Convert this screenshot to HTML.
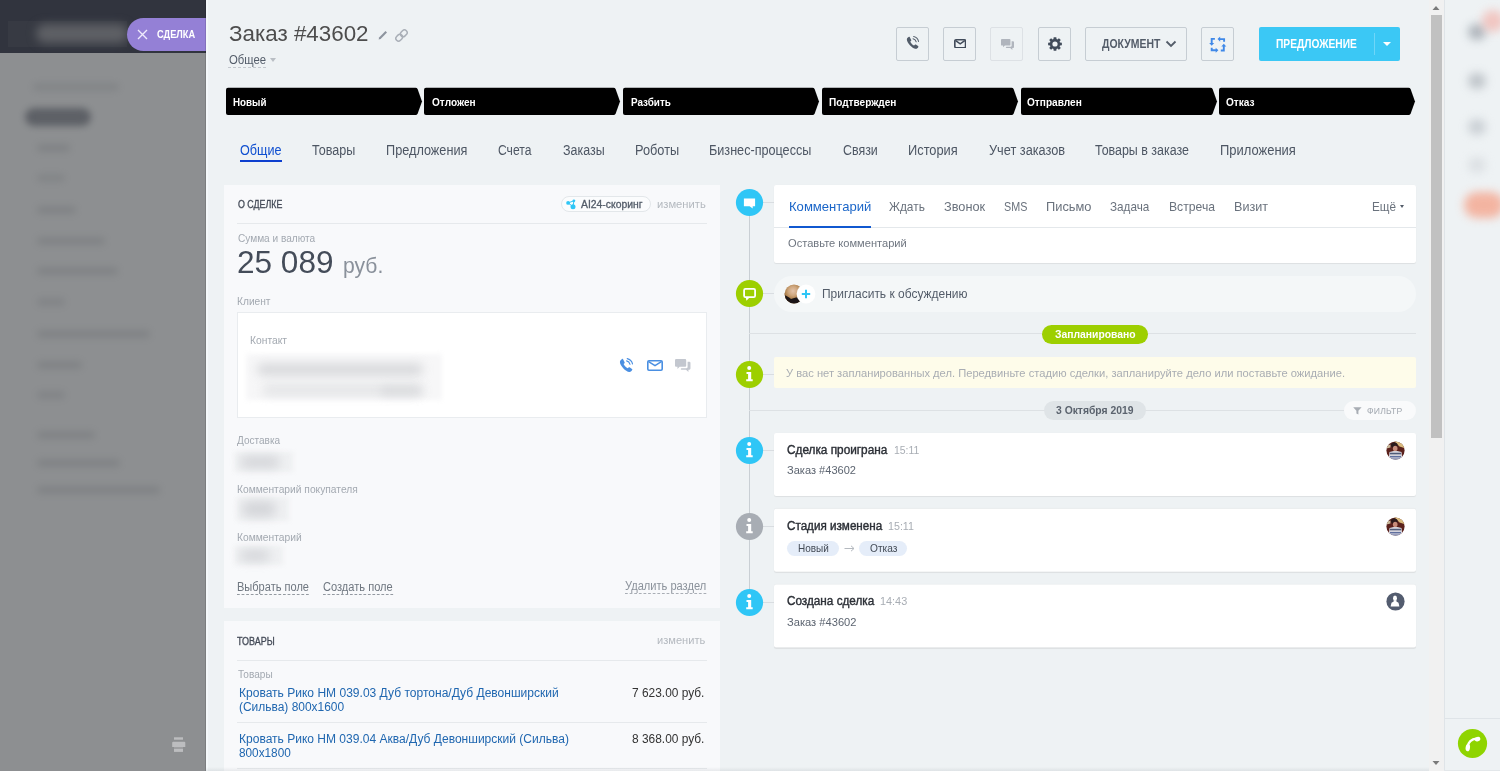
<!DOCTYPE html>
<html><head><meta charset="utf-8">
<style>
*{box-sizing:border-box;margin:0;padding:0}
html,body{width:1500px;height:771px;overflow:hidden}
body{font-family:"Liberation Sans",sans-serif;background:#eef2f4;position:relative;color:#333}
.abs{position:absolute}
.t{position:absolute;white-space:nowrap;line-height:1}
/* left overlay */
#lefthead{left:0;top:0;width:206px;height:53px;background:#31343e}
#leftbody{left:0;top:53px;width:206px;height:718px;background:#8d8f91}
.blur{position:absolute;border-radius:8px;filter:blur(4px)}
#label{left:127px;top:18px;width:80px;height:33px;background:#9480d6;border-radius:16.5px 0 0 16.5px}
/* panel */
#panel{left:206px;top:0;width:1224px;height:771px;background:#eef2f4}
.btn{position:absolute;top:27px;height:34px;border:1px solid #c6cdd3;border-radius:2px;background:#eef2f4}
.stage{position:absolute;top:88px;height:27px;width:196px;background:#000}
.stage span{position:absolute;left:7px;top:8px;font-size:12px;font-weight:bold;color:#fff;line-height:1;letter-spacing:-0.3px}
.tab{position:absolute;font-size:14px;color:#4d5663;line-height:1;white-space:nowrap}
.card{position:absolute;background:#f8f9fb}
.lbl{position:absolute;font-size:12px;color:#a3a9b1;line-height:1;white-space:nowrap;letter-spacing:-0.2px}
.hr{position:absolute;height:1px;background:#e6e9ec}
.tl-card{position:absolute;left:774px;width:642px;background:#fff;border-radius:2px;box-shadow:0 1px 1px rgba(0,0,0,.07),0 0 1px rgba(0,0,0,.04)}
.ic{position:absolute;width:27px;height:27px;border-radius:50%}
</style></head><body>

<!-- LEFT OVERLAY -->
<div class="abs" id="lefthead"></div>
<div class="abs" id="leftbody"></div>
<!-- left blurred content -->
<div class="abs" style="left:8px;top:21px;width:119px;height:26px;background:#373a43"></div>
<div class="abs" style="left:36px;top:24px;width:92px;height:19px;border-radius:9px;background:#5e6065;filter:blur(5px)"></div>
<div class="abs" style="left:33px;top:82.6px;width:86px;height:8px;border-radius:4px;background:#50545a;opacity:0.16;filter:blur(3.5px)"></div>
<div class="abs" style="left:37px;top:143.5px;width:33px;height:8px;border-radius:4px;background:#50545a;opacity:0.2;filter:blur(3.5px)"></div>
<div class="abs" style="left:37px;top:174.0px;width:28px;height:8px;border-radius:4px;background:#50545a;opacity:0.16;filter:blur(3.5px)"></div>
<div class="abs" style="left:37px;top:205.7px;width:39px;height:8px;border-radius:4px;background:#50545a;opacity:0.2;filter:blur(3.5px)"></div>
<div class="abs" style="left:37px;top:236.8px;width:68px;height:8px;border-radius:4px;background:#50545a;opacity:0.2;filter:blur(3.5px)"></div>
<div class="abs" style="left:37px;top:267.0px;width:81px;height:8px;border-radius:4px;background:#50545a;opacity:0.2;filter:blur(3.5px)"></div>
<div class="abs" style="left:37px;top:298.0px;width:28px;height:8px;border-radius:4px;background:#50545a;opacity:0.18;filter:blur(3.5px)"></div>
<div class="abs" style="left:37px;top:329.5px;width:113px;height:8px;border-radius:4px;background:#50545a;opacity:0.2;filter:blur(3.5px)"></div>
<div class="abs" style="left:37px;top:360.6px;width:45px;height:8px;border-radius:4px;background:#50545a;opacity:0.2;filter:blur(3.5px)"></div>
<div class="abs" style="left:37px;top:391.0px;width:28px;height:8px;border-radius:4px;background:#50545a;opacity:0.18;filter:blur(3.5px)"></div>
<div class="abs" style="left:37px;top:431.0px;width:58px;height:8px;border-radius:4px;background:#50545a;opacity:0.2;filter:blur(3.5px)"></div>
<div class="abs" style="left:37px;top:459.0px;width:83px;height:8px;border-radius:4px;background:#50545a;opacity:0.2;filter:blur(3.5px)"></div>
<div class="abs" style="left:37px;top:486.0px;width:123px;height:8px;border-radius:4px;background:#50545a;opacity:0.2;filter:blur(3.5px)"></div>
<div class="abs" style="left:25px;top:108px;width:66px;height:18px;border-radius:9px;background:#5b5e64;opacity:.95;filter:blur(3.5px)"></div>
<svg class="abs" style="left:172px;top:737px" width="14" height="16" viewBox="0 0 14 16"><rect x="2" y="0.3" width="9" height="2.4" fill="#bcbdbf"/><path d="M1.2 4.8 H12.3 Q13.3 4.8 13.3 5.8 V10 H11 V9.9 H2.4 V10 H0.2 V5.8 Q0.2 4.8 1.2 4.8 Z" fill="#bcbdbf"/><rect x="2" y="10" width="9" height="2" fill="#9fa0a2"/><rect x="2" y="12" width="9" height="2.9" fill="#bcbdbf"/></svg>
<div class="abs" id="label"></div>
<div class="t" id="sdelka" style="left:156.8px;top:29.54px;font-size:10px;font-weight:bold;color:#fff;transform-origin:0 0;transform:scaleX(0.927)">СДЕЛКА</div>
<svg class="abs" style="left:137px;top:29px" width="11" height="11" viewBox="0 0 11 11" stroke="#efeafc" stroke-width="1.4" fill="none"><path d="M1 1 L10 10 M10 1 L1 10"/></svg>

<!-- PANEL -->
<div class="abs" id="panel"></div>

<div class="abs" style="left:205px;top:0;width:1px;height:771px;background:rgba(0,0,0,.12)"></div>
<div class="abs" style="left:206px;top:0;width:2px;height:771px;background:#f4f8fa"></div>
<!-- title -->
<div class="t" id="title" style="left:228.6px;top:22.95px;font-size:22.5px;color:#4d4d4d;transform-origin:0 0;transform:scaleX(0.994)">Заказ #43602</div>
<div class="t" id="obsh" style="left:228.6px;top:53.84px;font-size:12px;color:#535c69;transform-origin:0 0;transform:scaleX(0.944)">Общее</div>


<!-- pencil & link icons -->
<svg class="abs" style="left:377px;top:29px" width="12" height="12" viewBox="0 0 12 12"><path d="M1.6 10.4 L2.1 8.4 L8.5 2 L10 3.5 L3.6 9.9 Z" fill="#8d949e"/></svg>
<svg class="abs" style="left:395px;top:29px" width="13" height="13" viewBox="0 0 13 13" fill="none" stroke="#a9afb7" stroke-width="1.5"><rect x="6.1" y="0.7" width="5.4" height="7.2" rx="2.7" transform="rotate(45 8.8 4.3)"/><rect x="1.5" y="5.1" width="5.4" height="7.2" rx="2.7" transform="rotate(45 4.2 8.7)"/></svg>
<div class="abs" style="left:228px;top:67px;width:38px;border-top:1px dashed #c3c8ce"></div>
<div class="abs" style="left:270px;top:58px;width:0;height:0;border:3.5px solid transparent;border-top:4px solid #b9bec4"></div>

<!-- top buttons -->
<div class="btn" style="left:896px;width:33.4px"></div>
<div class="btn" style="left:943px;width:33.4px"></div>
<div class="btn" style="left:990px;width:33.4px;border-color:#dde1e5"></div>
<div class="btn" style="left:1038px;width:33.4px"></div>
<div class="btn" style="left:1085px;width:102px"></div>
<div class="t" id="dok" style="left:1102.0px;top:37.84px;font-size:12px;font-weight:bold;color:#535c69;transform-origin:0 0;transform:scaleX(0.871)">ДОКУМЕНТ</div>
<svg class="abs" style="left:1165px;top:40px" width="12" height="8" viewBox="0 0 12 8" fill="none" stroke="#535c69" stroke-width="1.8"><path d="M1.5 1.5 L6 6 L10.5 1.5"/></svg>
<div class="btn" style="left:1201px;width:33.4px"></div>
<div class="abs" style="left:1259px;top:27px;width:141px;height:34px;background:#3bc8f5;border-radius:2px"></div>
<div class="t" id="predl" style="left:1276.3px;top:37.84px;font-size:12px;font-weight:bold;color:#fff;transform-origin:0 0;transform:scaleX(0.852)">ПРЕДЛОЖЕНИЕ</div>
<div class="abs" style="left:1374px;top:33px;width:1px;height:22px;background:#6fd6f8"></div>
<div class="abs" style="left:1383px;top:42px;width:0;height:0;border:4px solid transparent;border-top:4px solid #fff"></div>


<!-- stages -->
<svg class="abs" style="left:226.0px;top:87px" width="198" height="29" viewBox="0 0 198 29"><path d="M2 0.7 H189.5 Q191 0.7 191.6 2 L196 14.4 L191.6 26.8 Q191 28.1 189.5 28.1 H2 Q0 28.1 0 26.1 V2.7 Q0 0.7 2 0.7 Z" fill="#000"/></svg>
<div class="t" id="st0" style="left:233.3px;top:96.84px;font-size:11.5px;font-weight:bold;color:#fff;transform-origin:0 0;transform:scaleX(0.852)">Новый</div>
<svg class="abs" style="left:424.0px;top:87px" width="198" height="29" viewBox="0 0 198 29"><path d="M2 0.7 H189.5 Q191 0.7 191.6 2 L196 14.4 L191.6 26.8 Q191 28.1 189.5 28.1 H2 Q0 28.1 0 26.1 V2.7 Q0 0.7 2 0.7 Z" fill="#000"/></svg>
<div class="t" id="st1" style="left:431.5px;top:96.84px;font-size:11.5px;font-weight:bold;color:#fff;transform-origin:0 0;transform:scaleX(0.877)">Отложен</div>
<svg class="abs" style="left:622.8px;top:87px" width="198" height="29" viewBox="0 0 198 29"><path d="M2 0.7 H189.5 Q191 0.7 191.6 2 L196 14.4 L191.6 26.8 Q191 28.1 189.5 28.1 H2 Q0 28.1 0 26.1 V2.7 Q0 0.7 2 0.7 Z" fill="#000"/></svg>
<div class="t" id="st2" style="left:630.5px;top:96.84px;font-size:11.5px;font-weight:bold;color:#fff;transform-origin:0 0;transform:scaleX(0.860)">Разбить</div>
<svg class="abs" style="left:822.0px;top:87px" width="198" height="29" viewBox="0 0 198 29"><path d="M2 0.7 H189.5 Q191 0.7 191.6 2 L196 14.4 L191.6 26.8 Q191 28.1 189.5 28.1 H2 Q0 28.1 0 26.1 V2.7 Q0 0.7 2 0.7 Z" fill="#000"/></svg>
<div class="t" id="st3" style="left:828.7px;top:96.84px;font-size:11.5px;font-weight:bold;color:#fff;transform-origin:0 0;transform:scaleX(0.874)">Подтвержден</div>
<svg class="abs" style="left:1020.6px;top:87px" width="198" height="29" viewBox="0 0 198 29"><path d="M2 0.7 H189.5 Q191 0.7 191.6 2 L196 14.4 L191.6 26.8 Q191 28.1 189.5 28.1 H2 Q0 28.1 0 26.1 V2.7 Q0 0.7 2 0.7 Z" fill="#000"/></svg>
<div class="t" id="st4" style="left:1027.4px;top:96.84px;font-size:11.5px;font-weight:bold;color:#fff;transform-origin:0 0;transform:scaleX(0.878)">Отправлен</div>
<svg class="abs" style="left:1219.2px;top:87px" width="198" height="29" viewBox="0 0 198 29"><path d="M2 0.7 H189.5 Q191 0.7 191.6 2 L196 14.4 L191.6 26.8 Q191 28.1 189.5 28.1 H2 Q0 28.1 0 26.1 V2.7 Q0 0.7 2 0.7 Z" fill="#000"/></svg>
<div class="t" id="st5" style="left:1225.9px;top:96.84px;font-size:11.5px;font-weight:bold;color:#fff;transform-origin:0 0;transform:scaleX(0.876)">Отказ</div>

<!-- tabs -->
<div class="tab" id="tab0" style="top:143.15px;font-size:14px;left:239.9px;color:#0f4fd0;transform-origin:0 0;transform:scaleX(0.900)">Общие</div>
<div class="tab" id="tab1" style="top:143.15px;font-size:14px;left:312.1px;color:#4d5663;transform-origin:0 0;transform:scaleX(0.898)">Товары</div>
<div class="tab" id="tab2" style="top:143.15px;font-size:14px;left:385.9px;color:#4d5663;transform-origin:0 0;transform:scaleX(0.907)">Предложения</div>
<div class="tab" id="tab3" style="top:143.15px;font-size:14px;left:498.3px;color:#4d5663;transform-origin:0 0;transform:scaleX(0.865)">Счета</div>
<div class="tab" id="tab4" style="top:143.15px;font-size:14px;left:562.5px;color:#4d5663;transform-origin:0 0;transform:scaleX(0.890)">Заказы</div>
<div class="tab" id="tab5" style="top:143.15px;font-size:14px;left:635.1px;color:#4d5663;transform-origin:0 0;transform:scaleX(0.911)">Роботы</div>
<div class="tab" id="tab6" style="top:143.15px;font-size:14px;left:709.2px;color:#4d5663;transform-origin:0 0;transform:scaleX(0.902)">Бизнес-процессы</div>
<div class="tab" id="tab7" style="top:143.15px;font-size:14px;left:843.2px;color:#4d5663;transform-origin:0 0;transform:scaleX(0.888)">Связи</div>
<div class="tab" id="tab8" style="top:143.15px;font-size:14px;left:908.4px;color:#4d5663;transform-origin:0 0;transform:scaleX(0.916)">История</div>
<div class="tab" id="tab9" style="top:143.15px;font-size:14px;left:988.8px;color:#4d5663;transform-origin:0 0;transform:scaleX(0.911)">Учет заказов</div>
<div class="tab" id="tab10" style="top:143.15px;font-size:14px;left:1095.2px;color:#4d5663;transform-origin:0 0;transform:scaleX(0.889)">Товары в заказе</div>
<div class="tab" id="tab11" style="top:143.15px;font-size:14px;left:1219.9px;color:#4d5663;transform-origin:0 0;transform:scaleX(0.926)">Приложения</div>
<div class="abs" style="left:239.6px;top:160px;width:42.4px;height:2px;background:#0d3fcf"></div>


<!-- LEFT CARD 1 -->
<div class="card" style="left:224px;top:185px;width:496px;height:423px"></div>
<div class="t" id="osdelke" style="left:237.5px;top:200.11px;font-size:10px;font-weight:normal;-webkit-text-stroke:0.28px #424956;color:#424956;letter-spacing:0;transform-origin:0 0;transform:scaleX(0.887)">О СДЕЛКЕ</div>
<div class="abs" style="left:561px;top:196px;width:90px;height:16px;border:1px solid #e3e7ea;border-radius:8px;background:#fbfcfd"></div>
<div class="t" id="ai24" style="left:580.9px;top:199.53px;font-size:10px;font-weight:normal;-webkit-text-stroke:0.3px #535c69;color:#535c69;letter-spacing:0;transform-origin:0 0;transform:scaleX(1.038)">AI24-скоринг</div>
<div class="t" id="izm1" style="left:657.3px;top:198.69px;font-size:11px;color:#b4b9bf;letter-spacing:0;transform-origin:0 0;transform:scaleX(1.018)">изменить</div>
<div class="hr" style="left:237px;top:223px;width:470px"></div>
<div class="lbl" id="summa" style="left:237.5px;top:232.69px;font-size:11px;letter-spacing:0;transform-origin:0 0;transform:scaleX(0.918)">Сумма и валюта</div>
<div class="t" id="sum" style="left:237.3px;top:246.76px;font-size:31px;color:#444c59;transform-origin:0 0;transform:scaleX(1.018)">25 089</div>
<div class="t" id="rub" style="left:343.2px;top:255.38px;font-size:22px;color:#8a919b;transform-origin:0 0;transform:scaleX(0.961)">руб.</div>
<div class="lbl" id="klient" style="left:237.3px;top:295.69px;font-size:11px;letter-spacing:0;transform-origin:0 0;transform:scaleX(0.926)">Клиент</div>
<div class="abs" style="left:237px;top:312px;width:470px;height:106px;background:#fff;border:1px solid #e9ecef"></div>
<div class="lbl" id="kontakt" style="left:250.1px;top:334.69px;font-size:11px;letter-spacing:0;transform-origin:0 0;transform:scaleX(0.935)">Контакт</div>
<div class="lbl" id="dost" style="left:237.3px;top:434.69px;font-size:11px;letter-spacing:0;transform-origin:0 0;transform:scaleX(0.912)">Доставка</div>
<div class="lbl" id="kompok" style="left:237.3px;top:483.69px;font-size:11px;letter-spacing:0;transform-origin:0 0;transform:scaleX(0.931)">Комментарий покупателя</div>
<div class="lbl" id="komm" style="left:237.3px;top:531.69px;font-size:11px;letter-spacing:0;transform-origin:0 0;transform:scaleX(0.934)">Комментарий</div>
<div class="t" id="vyb" style="left:237.3px;top:580.84px;font-size:12px;color:#6f7780;border-bottom:1px dashed #8f959d;padding-bottom:1px;transform-origin:0 0;transform:scaleX(0.920)">Выбрать поле</div>
<div class="t" id="sozd" style="left:323.1px;top:580.84px;font-size:12px;color:#6f7780;border-bottom:1px dashed #8f959d;padding-bottom:1px;transform-origin:0 0;transform:scaleX(0.923)">Создать поле</div>
<div class="t" id="udal" style="left:625.4px;top:579.84px;font-size:12px;color:#8b929b;border-bottom:1px dashed #a5abb2;padding-bottom:1px;transform-origin:0 0;transform:scaleX(0.924)">Удалить раздел</div>

<!-- LEFT CARD 2 -->
<div class="card" style="left:224px;top:621px;width:496px;height:150px"></div>
<div class="t" id="tovh" style="left:237.3px;top:637.11px;font-size:10px;font-weight:normal;-webkit-text-stroke:0.28px #424956;color:#424956;letter-spacing:0;transform-origin:0 0;transform:scaleX(0.900)">ТОВАРЫ</div>
<div class="t" id="izm2" style="left:657.3px;top:634.69px;font-size:11px;color:#b4b9bf;letter-spacing:0;transform-origin:0 0;transform:scaleX(1.008)">изменить</div>
<div class="hr" style="left:237px;top:660px;width:470px"></div>
<div class="lbl" id="tovl" style="left:237.6px;top:668.69px;font-size:11px;letter-spacing:0;transform-origin:0 0;transform:scaleX(0.915)">Товары</div>
<div class="t" id="p1a" style="left:239.0px;top:686.84px;font-size:12px;color:#2067b0;transform-origin:0 0;transform:scaleX(1.003)">Кровать Рико НМ 039.03 Дуб тортона/Дуб Девонширский</div>
<div class="t" id="p1b" style="left:239.0px;top:700.84px;font-size:12px;color:#2067b0;transform-origin:0 0;transform:scaleX(0.996)">(Сильва) 800х1600</div>
<div class="t" id="pr1" style="left:631.6px;top:686.84px;font-size:12px;color:#333;transform-origin:0 0;transform:scaleX(0.993)">7 623.00 руб.</div>
<div class="hr" style="left:237px;top:722px;width:470px"></div>
<div class="t" id="p2a" style="left:239.0px;top:732.84px;font-size:12px;color:#2067b0;transform-origin:0 0;transform:scaleX(1.002)">Кровать Рико НМ 039.04 Аква/Дуб Девонширский (Сильва)</div>
<div class="t" id="p2b" style="left:239.0px;top:746.84px;font-size:12px;color:#2067b0;transform-origin:0 0;transform:scaleX(0.982)">800х1800</div>
<div class="t" id="pr2" style="left:631.6px;top:732.84px;font-size:12px;color:#333;transform-origin:0 0;transform:scaleX(0.993)">8 368.00 руб.</div>
<div class="hr" style="left:237px;top:768px;width:470px"></div>


<!-- TIMELINE -->
<div class="abs" style="left:749px;top:203px;width:1px;height:400px;background:#c9cfd4"></div>
<!-- editor card -->
<div class="abs" style="left:762px;top:202px;width:12px;height:1px;background:#d9dde1"></div>
<div class="tl-card" style="top:185px;height:78px"></div>
<div class="hr" style="left:774px;top:227px;width:642px;background:#e4e8eb"></div>
<div class="t" id="m0" style="left:788.6px;top:200.00px;font-size:13px;color:#1a65c8;transform-origin:0 0;transform:scaleX(1.005)">Комментарий</div>
<div class="abs" style="left:789px;top:226px;width:82px;height:2px;background:#1058d0"></div>
<div class="t" id="m1" style="left:889.4px;top:200.00px;font-size:13px;color:#6a727d;transform-origin:0 0;transform:scaleX(0.912)">Ждать</div>
<div class="t" id="m2" style="left:944.0px;top:200.00px;font-size:13px;color:#6a727d;transform-origin:0 0;transform:scaleX(0.980)">Звонок</div>
<div class="t" id="m3" style="left:1004.0px;top:200.00px;font-size:13px;color:#6a727d;transform-origin:0 0;transform:scaleX(0.828)">SMS</div>
<div class="t" id="m4" style="left:1045.5px;top:200.00px;font-size:13px;color:#6a727d;transform-origin:0 0;transform:scaleX(0.988)">Письмо</div>
<div class="t" id="m5" style="left:1110.0px;top:200.00px;font-size:13px;color:#6a727d;transform-origin:0 0;transform:scaleX(0.901)">Задача</div>
<div class="t" id="m6" style="left:1168.6px;top:200.00px;font-size:13px;color:#6a727d;transform-origin:0 0;transform:scaleX(0.936)">Встреча</div>
<div class="t" id="m7" style="left:1233.8px;top:200.00px;font-size:13px;color:#6a727d;transform-origin:0 0;transform:scaleX(0.969)">Визит</div>
<div class="t" id="m8" style="left:1371.5px;top:200.00px;font-size:13px;color:#6a727d;transform-origin:0 0;transform:scaleX(0.903)">Ещё</div>
<div class="abs" style="left:1400px;top:205.3px;width:0;height:0;border:2.5px solid transparent;border-top:3px solid #535c69"></div>
<div class="t" id="ostav" style="left:788.4px;top:237.69px;font-size:11px;color:#6f7680;transform-origin:0 0;transform:scaleX(1.009)">Оставьте комментарий</div>

<!-- invite -->
<div class="abs" style="left:762px;top:293px;width:12px;height:1px;background:#d9dde1"></div>
<div class="abs" style="left:774px;top:276px;width:642px;height:36px;border-radius:18px;background:#f4f7f8"></div>
<div class="t" id="invite" style="left:821.6px;top:287.84px;font-size:12px;color:#535c69;transform-origin:0 0;transform:scaleX(0.998)">Пригласить к обсуждению</div>

<!-- planned -->
<div class="abs" style="left:749px;top:333px;width:667px;height:1px;background:#dde1e4"></div>
<div class="abs" style="left:1042px;top:325px;width:106px;height:19px;border-radius:10px;background:#9dcf00"></div>
<div class="t" id="zapl" style="left:1054.5px;top:328.69px;font-size:11px;font-weight:bold;color:#fff;transform-origin:0 0;transform:scaleX(0.940)">Запланировано</div>
<div class="abs" style="left:762px;top:374px;width:12px;height:1px;background:#d9dde1"></div>
<div class="abs" style="left:774px;top:357px;width:642px;height:31px;background:#fefcea;border-radius:2px"></div>
<div class="t" id="noplan" style="left:786.0px;top:367.69px;font-size:11px;color:#a9adb3;transform-origin:0 0;transform:scaleX(1.015)">У вас нет запланированных дел. Передвиньте стадию сделки, запланируйте дело или поставьте ожидание.</div>

<!-- date -->
<div class="abs" style="left:749px;top:410px;width:667px;height:1px;background:#dde1e4"></div>
<div class="abs" style="left:1044px;top:401px;width:102px;height:19px;border-radius:10px;background:#dfe4e7"></div>
<div class="t" id="date" style="left:1056.1px;top:404.69px;font-size:11px;font-weight:bold;color:#5b636e;transform-origin:0 0;transform:scaleX(0.941)">3 Октября 2019</div>
<div class="abs" style="left:1344px;top:401px;width:72px;height:19px;border-radius:10px;background:#f9fafb"></div>
<div class="t" id="filtr" style="left:1367.3px;top:407.38px;font-size:9px;color:#a3a9b1;letter-spacing:0.2px;transform-origin:0 0;transform:scaleX(0.959)">ФИЛЬТР</div>

<!-- events -->
<div class="abs" style="left:762px;top:450px;width:12px;height:1px;background:#d9dde1"></div>
<div class="tl-card" style="top:433px;height:63px"></div>
<div class="t" id="e1" style="left:787.4px;top:443.84px;font-size:12px;color:#2b2f36;font-weight:normal;-webkit-text-stroke:0.4px #2b2f36;transform-origin:0 0;transform:scaleX(0.983)">Сделка проиграна</div>
<div class="t" id="e1t" style="left:893.6px;top:444.84px;font-size:11.5px;color:#a8adb4;transform-origin:0 0;transform:scaleX(0.908)">15:11</div>
<div class="t" id="e1s" style="left:787.4px;top:465.27px;font-size:11.5px;color:#5c6470;transform-origin:0 0;transform:scaleX(0.962)">Заказ #43602</div>

<div class="abs" style="left:762px;top:526px;width:12px;height:1px;background:#d9dde1"></div>
<div class="tl-card" style="top:508px;height:63px;transform:translateY(0.75px)"></div>
<div class="t" id="e2" style="left:787.0px;top:519.84px;font-size:12px;color:#2b2f36;font-weight:normal;-webkit-text-stroke:0.4px #2b2f36;transform-origin:0 0;transform:scaleX(0.972)">Стадия изменена</div>
<div class="t" id="e2t" style="left:888.0px;top:520.84px;font-size:11.5px;color:#a8adb4;transform-origin:0 0;transform:scaleX(0.930)">15:11</div>
<div class="abs" style="left:787px;top:541px;width:52px;height:15px;border-radius:8px;background:#e5edf9"></div>
<div class="t" id="e2a" style="left:797.8px;top:542.69px;font-size:11px;color:#434b56;transform-origin:0 0;transform:scaleX(0.908)">Новый</div>
<div class="abs" style="left:859px;top:541px;width:48px;height:15px;border-radius:8px;background:#e5edf9"></div>
<div class="t" id="e2b" style="left:869.6px;top:542.69px;font-size:11px;color:#434b56;transform-origin:0 0;transform:scaleX(0.924)">Отказ</div>
<svg class="abs" style="left:843.5px;top:544px" width="11" height="9" viewBox="0 0 11 9" fill="none" stroke="#b4b9bf" stroke-width="1"><path d="M0.5 4.5 H10 M7 1.8 L10 4.5 L7 7.2"/></svg>

<div class="abs" style="left:762px;top:602px;width:12px;height:1px;background:#d9dde1"></div>
<div class="tl-card" style="top:584px;height:63px;transform:translateY(0.5px)"></div>
<div class="t" id="e3" style="left:787.0px;top:594.84px;font-size:12px;color:#2b2f36;font-weight:normal;-webkit-text-stroke:0.4px #2b2f36;transform-origin:0 0;transform:scaleX(0.978)">Создана сделка</div>
<div class="t" id="e3t" style="left:880.2px;top:595.84px;font-size:11.5px;color:#a8adb4;transform-origin:0 0;transform:scaleX(0.944)">14:43</div>
<div class="t" id="e3s" style="left:787.0px;top:617.27px;font-size:11.5px;color:#5c6470;transform-origin:0 0;transform:scaleX(0.969)">Заказ #43602</div>

<!-- timeline icons -->
<svg class="abs" style="left:735px;top:187.9px" width="29" height="29" viewBox="-14.5 -14.5 29 29"><circle r="13.6" fill="#2fc6f6"/><path d="M-5.6 -4 H5.6 V3.8 H3.2 V6.1 L0.1 3.8 H-5.6 Z" fill="#fff"/></svg>
<svg class="abs" style="left:735px;top:278.9px" width="29" height="29" viewBox="-14.5 -14.5 29 29"><circle r="13.6" fill="#9dcf00"/><rect x="-5.4" y="-4.6" width="11" height="8.2" rx="1.4" fill="none" stroke="#fff" stroke-width="1.8"/><path d="M-3.7 4.2 H-0.2 L-3 7.2 Z" fill="#fff"/></svg>
<svg class="abs" style="left:735px;top:359.9px" width="29" height="29" viewBox="-14.5 -14.5 29 29"><circle r="13.6" fill="#9dcf00"/><circle cx="-0.3" cy="-6.5" r="2" fill="#fff"/><path d="M-3 -2.6 H1.7 V4.8 H3.2 V6.8 H-3.3 V4.8 H-1.4 V-0.5 H-3 Z" fill="#fff"/></svg>
<svg class="abs" style="left:735px;top:436.2px" width="29" height="29" viewBox="-14.5 -14.5 29 29"><circle r="13.6" fill="#2fc6f6"/><circle cx="-0.3" cy="-6.5" r="2" fill="#fff"/><path d="M-3 -2.6 H1.7 V4.8 H3.2 V6.8 H-3.3 V4.8 H-1.4 V-0.5 H-3 Z" fill="#fff"/></svg>
<svg class="abs" style="left:735px;top:511.9px" width="29" height="29" viewBox="-14.5 -14.5 29 29"><circle r="13.6" fill="#a8adb4"/><circle cx="-0.3" cy="-6.5" r="2" fill="#fff"/><path d="M-3 -2.6 H1.7 V4.8 H3.2 V6.8 H-3.3 V4.8 H-1.4 V-0.5 H-3 Z" fill="#fff"/></svg>
<svg class="abs" style="left:735px;top:587.7px" width="29" height="29" viewBox="-14.5 -14.5 29 29"><circle r="13.6" fill="#2fc6f6"/><circle cx="-0.3" cy="-6.5" r="2" fill="#fff"/><path d="M-3 -2.6 H1.7 V4.8 H3.2 V6.8 H-3.3 V4.8 H-1.4 V-0.5 H-3 Z" fill="#fff"/></svg>
<div class="abs" style="left:206px;top:767px;width:1223px;height:4px;background:linear-gradient(rgba(0,0,0,0),rgba(40,50,60,.08))"></div>
<!-- scrollbar + right panel -->
<div class="abs" style="left:1429px;top:0;width:14.5px;height:771px;background:#f1f1f1"></div>
<div class="abs" style="left:1430.5px;top:15px;width:11px;height:423px;background:#c1c1c1"></div>
<svg class="abs" style="left:1432px;top:5px" width="8" height="6" viewBox="0 0 8 6"><path d="M0.5 5 L4 1 L7.5 5 Z" fill="#7a7a7a"/></svg>
<svg class="abs" style="left:1432px;top:760px" width="8" height="6" viewBox="0 0 8 6"><path d="M0.5 1 L4 5 L7.5 1 Z" fill="#7a7a7a"/></svg>
<div class="abs" style="left:1443.5px;top:0;width:56.5px;height:771px;background:#eef2f4;border-left:1px solid #dfe4e8"></div>
<div class="abs" style="left:1444px;top:718px;width:56px;height:1px;background:#dfe4e8"></div>
<div class="abs" style="left:1444px;top:770px;width:56px;height:1px;background:#e3e7ea"></div>
<div class="abs" style="left:1468px;top:24px;width:18px;height:16px;border-radius:8px;background:#a9afb6;opacity:0.9;filter:blur(5px)"></div>
<div class="abs" style="left:1468px;top:73px;width:18px;height:16px;border-radius:8px;background:#b4bac0;opacity:0.8;filter:blur(5px)"></div>
<div class="abs" style="left:1468px;top:119px;width:18px;height:16px;border-radius:8px;background:#bcc2c8;opacity:0.7;filter:blur(5px)"></div>
<div class="abs" style="left:1468px;top:157px;width:18px;height:16px;border-radius:8px;background:#d5d9dd;opacity:0.7;filter:blur(5px)"></div>
<div class="abs" style="left:1482px;top:10px;width:22px;height:22px;border-radius:11px;background:#f3aea6;opacity:.65;filter:blur(5px)"></div>
<div class="abs" style="left:1464px;top:192px;width:40px;height:26px;border-radius:13px;background:#f5a58d;opacity:.8;filter:blur(5px)"></div>
<svg class="abs" style="left:1457px;top:728px" width="31" height="31" viewBox="-15.5 -15.5 31 31"><circle r="14.6" fill="#8fd400"/><path d="M-4.9 3.5 C-4.6 -1.2 -0.8 -4.6 3.8 -4.9" stroke="#fff" stroke-width="2.3" fill="none"/><ellipse cx="-4.7" cy="4.1" rx="2.2" ry="3.7" transform="rotate(8 -4.7 4.1)" fill="#fff"/><ellipse cx="5" cy="-4.4" rx="2.9" ry="2.2" transform="rotate(-18 5 -4.4)" fill="#fff"/></svg>
<svg class="abs" style="left:1385.5px;top:441.3px" width="19" height="19" viewBox="-9.5 -9.5 19 19"><defs><clipPath id="av1"><circle r="9.1"/></clipPath></defs><g clip-path="url(#av1)"><rect x="-10" y="-10" width="20" height="20" fill="#5a211c"/><path d="M-4 -10 H10 V-2 L4 -4 L0 -8 Z" fill="#d9bb7e"/><path d="M-9 -5 L-5 -6 L-5 -3 L-9 -2 Z" fill="#c9b89a"/><ellipse cx="-1.2" cy="-5.5" rx="3.3" ry="2.6" fill="#2a1a1c"/><ellipse cx="-0.3" cy="-2" rx="2.3" ry="2.8" fill="#c78c7a"/><path d="M-7 10 L-6 1.5 L-2 0.5 L2 0.5 L6 1.5 L7 10 Z" fill="#d4d3dc"/><rect x="-5.5" y="2.3" width="11" height="1.5" fill="#4f5b78"/><rect x="-5.5" y="5.5" width="11" height="1.4" fill="#5f6f9f"/><rect x="-5" y="8" width="10" height="1.4" fill="#5f6f9f"/></g></svg>
<svg class="abs" style="left:1385.5px;top:517.0px" width="19" height="19" viewBox="-9.5 -9.5 19 19"><defs><clipPath id="av2"><circle r="9.1"/></clipPath></defs><g clip-path="url(#av2)"><rect x="-10" y="-10" width="20" height="20" fill="#5a211c"/><path d="M-4 -10 H10 V-2 L4 -4 L0 -8 Z" fill="#d9bb7e"/><path d="M-9 -5 L-5 -6 L-5 -3 L-9 -2 Z" fill="#c9b89a"/><ellipse cx="-1.2" cy="-5.5" rx="3.3" ry="2.6" fill="#2a1a1c"/><ellipse cx="-0.3" cy="-2" rx="2.3" ry="2.8" fill="#c78c7a"/><path d="M-7 10 L-6 1.5 L-2 0.5 L2 0.5 L6 1.5 L7 10 Z" fill="#d4d3dc"/><rect x="-5.5" y="2.3" width="11" height="1.5" fill="#4f5b78"/><rect x="-5.5" y="5.5" width="11" height="1.4" fill="#5f6f9f"/><rect x="-5" y="8" width="10" height="1.4" fill="#5f6f9f"/></g></svg>
<svg class="abs" style="left:1385.5px;top:592.4px" width="19" height="19" viewBox="-9.5 -9.5 19 19"><circle r="9.1" fill="#535c6f"/><ellipse cx="-0.5" cy="-3.3" rx="2" ry="2.6" fill="#fff"/><path d="M-1.8 -1.2 H0.9 V0 L3 1.2 L3.9 5.1 H-4.9 L-4 1.2 L-1.8 0 Z" fill="#fff"/></svg>
<svg class="abs" style="left:783.5px;top:283.5px" width="20" height="20" viewBox="-10 -10 20 20"><defs><clipPath id="av0"><circle r="9.4"/></clipPath><radialGradient id="g0" cx="0.45" cy="0.35" r="0.5"><stop offset="0" stop-color="#e3c3aa"/><stop offset="0.45" stop-color="#cfa77e"/><stop offset="1" stop-color="#9a6a30"/></radialGradient></defs><circle r="10" fill="#fff" opacity=".6"/><g clip-path="url(#av0)"><rect x="-10" y="-10" width="20" height="20" fill="url(#g0)"/><path d="M-10 1 C-7 2 -5 3 -3 5 C0 4 3 3 7 4 L10 10 H-10 Z" fill="#1b1517"/><path d="M-10 -3 C-9 0 -9 3 -8 6 L-10 10 Z" fill="#5a3015"/></g></svg>
<svg class="abs" style="left:796px;top:283.8px" width="20" height="20" viewBox="-10 -10 20 20"><circle r="9.4" fill="#fff"/><path d="M-4.2 0 H4.2 M0 -4.2 V4.2" stroke="#2fc6f6" stroke-width="2" fill="none"/></svg>
<svg class="abs" style="left:1353px;top:406.5px" width="9" height="8" viewBox="0 0 9 8"><path d="M0.2 0.2 H8.6 L5.4 3.8 V7.6 L3.4 6.4 V3.8 Z" fill="#a8adb4"/></svg>

<!-- top icons -->
<svg class="abs" style="left:905.6px;top:36.3px" width="13" height="13.9" viewBox="0 0 14 15"><path d="M3.2 0.9 C2.2 1.2 0.9 2.6 0.9 3.9 C0.9 7.4 6.6 13.6 10.4 13.9 C11.6 14 12.9 12.8 13.3 11.8 C13.4 11.4 13.3 11.1 13 10.9 L10.6 9.3 C10.3 9.1 9.9 9.1 9.6 9.4 L8.7 10.3 C7.2 9.6 5.3 7.6 4.6 6.1 L5.5 5.2 C5.8 4.9 5.8 4.5 5.6 4.2 L4.1 1.3 C3.9 1 3.6 0.8 3.2 0.9 Z" fill="#525c69"/>
<path d="M7.6 2.9 C9.3 3.3 10.6 4.6 11 6.3" stroke="#525c69" stroke-width="1.1" fill="none" stroke-linecap="round"/>
<path d="M8.2 0.6 C10.9 1.2 12.9 3.2 13.5 5.9" stroke="#525c69" stroke-width="1.1" fill="none" stroke-linecap="round"/></svg>
<svg class="abs" style="left:953.7px;top:38.6px" width="12.4" height="9.5" viewBox="0 0 13 10"><rect x="0.85" y="0.85" width="11.3" height="8.3" rx="1.2" fill="none" stroke="#414b5a" stroke-width="1.7"/><path d="M1.7 1.7 L6.5 5.2 L11.3 1.7" fill="none" stroke="#414b5a" stroke-width="1.53"/></svg>
<svg class="abs" style="left:1000.8px;top:38.7px" width="13.5" height="11.7" viewBox="0 0 15 13"><path d="M1 0 H9.5 Q10.5 0 10.5 1 V6.3 Q10.5 7.3 9.5 7.3 H4.3 L2.3 9.3 V7.3 H1 Q0 7.3 0 6.3 V1 Q0 0 1 0 Z" fill="#b0b5bd"/><path d="M11.8 2.6 H13.5 Q14.5 2.6 14.5 3.6 V8.9 Q14.5 9.9 13.5 9.9 H12.6 V12.2 L10.3 9.9 H6.2 Q5.4 9.9 5.3 9.2 L6 8.6 H10.6 Q11.8 8.6 11.8 7.4 Z" fill="#b0b5bd"/></svg>
<svg class="abs" style="left:1048px;top:36.8px" width="14" height="14" viewBox="0 0 14 14"><path d="M5.46 2.03 L5.68 0.13 L8.32 0.13 L8.54 2.03 L9.43 2.40 L10.93 1.20 L12.80 3.07 L11.60 4.57 L11.97 5.46 L13.87 5.68 L13.87 8.32 L11.97 8.54 L11.60 9.43 L12.80 10.93 L10.93 12.80 L9.43 11.60 L8.54 11.97 L8.32 13.87 L5.68 13.87 L5.46 11.97 L4.57 11.60 L3.07 12.80 L1.20 10.93 L2.40 9.43 L2.03 8.54 L0.13 8.32 L0.13 5.68 L2.03 5.46 L2.40 4.57 L1.20 3.07 L3.07 1.20 L4.57 2.40 Z M9.6 7.0 A2.6 2.6 0 1 0 4.4 7.0 A2.6 2.6 0 1 0 9.6 7.0 Z" fill="#414b5a" fill-rule="evenodd"/></svg>
<svg class="abs" style="left:1209px;top:36px" width="18" height="18" viewBox="0 0 18 18"><g fill="none" stroke="#3f88e8" stroke-width="1.9"><path d="M5.9 2.9 H2.7 V7.4"/><path d="M10.8 3.1 H15.1 V5.8"/><path d="M11.8 14.5 H14.8 V10"/><path d="M2.7 11.8 V14.3 H7.1"/></g>
<g fill="#3f88e8"><path d="M0.2 7 H5.2 L2.7 9.7 Z"/><path d="M11.2 0.5 V5.7 L8.5 3.1 Z"/><path d="M12.3 10.4 H17.3 L14.8 7.7 Z"/><path d="M6.7 11.8 V16.8 L9.4 14.3 Z"/></g></svg>
<!-- client icons -->
<svg class="abs" style="left:619px;top:358px" width="14" height="15" viewBox="0 0 14 15"><path d="M3.2 0.9 C2.2 1.2 0.9 2.6 0.9 3.9 C0.9 7.4 6.6 13.6 10.4 13.9 C11.6 14 12.9 12.8 13.3 11.8 C13.4 11.4 13.3 11.1 13 10.9 L10.6 9.3 C10.3 9.1 9.9 9.1 9.6 9.4 L8.7 10.3 C7.2 9.6 5.3 7.6 4.6 6.1 L5.5 5.2 C5.8 4.9 5.8 4.5 5.6 4.2 L4.1 1.3 C3.9 1 3.6 0.8 3.2 0.9 Z" fill="#4a8fe2"/>
<path d="M7.6 2.9 C9.3 3.3 10.6 4.6 11 6.3" stroke="#4a8fe2" stroke-width="1.1" fill="none" stroke-linecap="round"/>
<path d="M8.2 0.6 C10.9 1.2 12.9 3.2 13.5 5.9" stroke="#4a8fe2" stroke-width="1.1" fill="none" stroke-linecap="round"/></svg>
<svg class="abs" style="left:647px;top:360px" width="16" height="11" viewBox="0 0 16 11"><rect x="0.8" y="0.8" width="14.4" height="9.4" rx="1.2" fill="none" stroke="#4a8fe2" stroke-width="1.6"/><path d="M1.6 1.6 L8.0 5.720000000000001 L14.4 1.6" fill="none" stroke="#4a8fe2" stroke-width="1.4400000000000002"/></svg>
<svg class="abs" style="left:675px;top:359px" width="16" height="14" viewBox="0 0 15 13"><path d="M1 0 H9.5 Q10.5 0 10.5 1 V6.3 Q10.5 7.3 9.5 7.3 H4.3 L2.3 9.3 V7.3 H1 Q0 7.3 0 6.3 V1 Q0 0 1 0 Z" fill="#c3c7cf"/><path d="M11.8 2.6 H13.5 Q14.5 2.6 14.5 3.6 V8.9 Q14.5 9.9 13.5 9.9 H12.6 V12.2 L10.3 9.9 H6.2 Q5.4 9.9 5.3 9.2 L6 8.6 H10.6 Q11.8 8.6 11.8 7.4 Z" fill="#c3c7cf"/></svg>

<!-- card blurs -->
<div class="abs" style="left:246px;top:354px;width:196px;height:46px;background:#f7f7f8;filter:blur(2.5px)"></div>
<div class="abs" style="left:257px;top:364px;width:166px;height:11px;border-radius:5px;background:#bdbfc3;opacity:.6;filter:blur(5.5px)"></div>
<div class="abs" style="left:262px;top:385px;width:160px;height:10px;border-radius:5px;background:#c2c4c8;opacity:.42;filter:blur(5.5px)"></div>
<div class="abs" style="left:380px;top:386px;width:44px;height:10px;border-radius:5px;background:#c2c4c8;opacity:.35;filter:blur(5px)"></div>
<div class="abs" style="left:235px;top:452px;width:58px;height:20px;background:#eff0f2;filter:blur(2px)"></div>
<div class="abs" style="left:240px;top:456px;width:40px;height:12px;border-radius:7px;background:#c2c4c9;opacity:.6;filter:blur(5.5px)"></div>
<div class="abs" style="left:237px;top:497px;width:52px;height:24px;background:#eff0f2;filter:blur(2px)"></div>
<div class="abs" style="left:242px;top:501px;width:34px;height:16px;border-radius:7px;background:#c2c4c9;opacity:.6;filter:blur(5.5px)"></div>
<div class="abs" style="left:235px;top:546px;width:48px;height:19px;background:#eff0f2;filter:blur(2px)"></div>
<div class="abs" style="left:240px;top:550px;width:30px;height:11px;border-radius:7px;background:#c2c4c9;opacity:.6;filter:blur(5.5px)"></div>
<svg class="abs" style="left:566px;top:199px" width="10" height="11" viewBox="0 0 10 11"><g stroke="#2fc6f6" stroke-width="1" fill="none"><path d="M2.1 3.9 L7.9 1.8 M2.1 3.9 L7 7.7 M7.9 1.8 L7 7.7"/></g><circle cx="2.1" cy="3.9" r="1.9" fill="#2fc6f6"/><circle cx="7.9" cy="1.8" r="1.4" fill="#2fc6f6"/><circle cx="7" cy="7.8" r="2.5" fill="#2fc6f6"/></svg>


</body></html>
